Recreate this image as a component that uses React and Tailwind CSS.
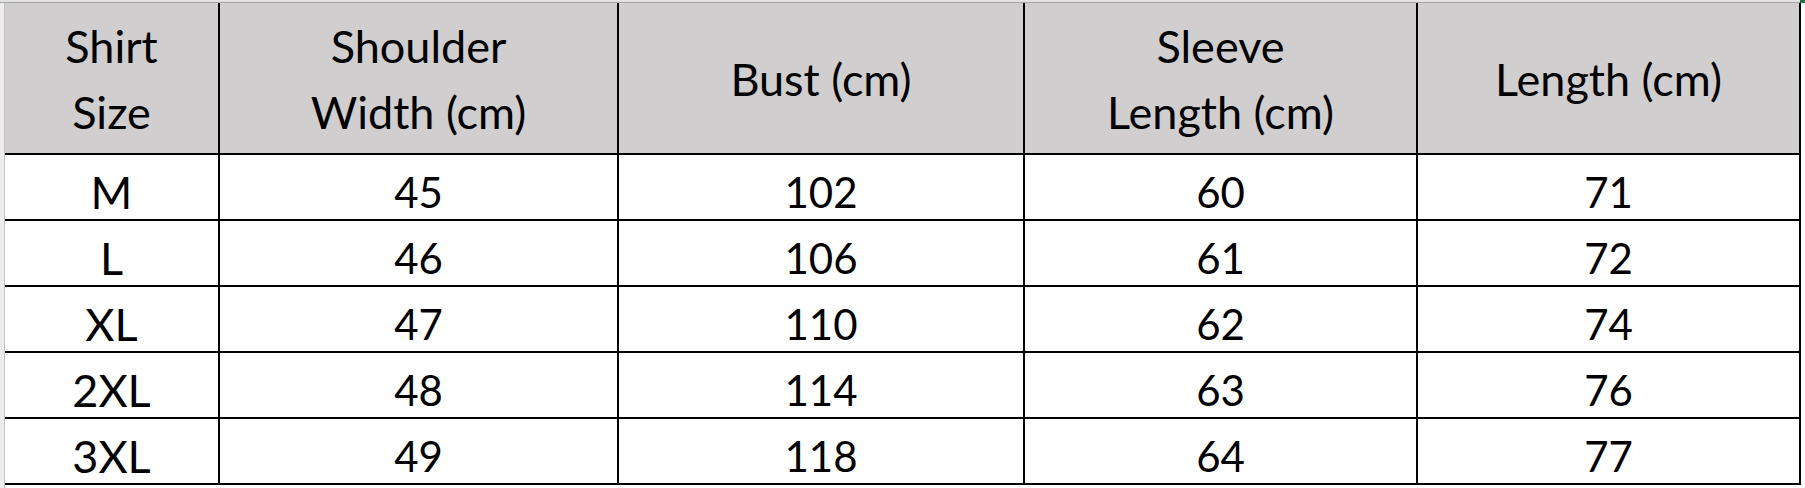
import React from 'react';

const cols = ['w-[213px]', 'w-[397px]', 'w-[404px]', 'w-[391px]', 'w-[381px]'];

const rows = [
  ['M', '45', '102', '60', '71'],
  ['L', '46', '106', '61', '72'],
  ['XL', '47', '110', '62', '74'],
  ['2XL', '48', '114', '63', '76'],
  ['3XL', '49', '118', '64', '77'],
];

function HeaderCell({ children, w }) {
  return (
    <div className={`${w} h-[150px] bg-[#d0cece] flex items-center justify-center text-center text-[45px] leading-[66px] pt-[1px]`}>
      <div>{children}</div>
    </div>
  );
}

function Cell({ children, w, first }) {
  return (
    <div className={`${w} h-[64px] bg-white flex items-center justify-center leading-[50px] pt-[10px] ${first ? 'text-[45px]' : 'text-[42px]'}`}>
      {children}
    </div>
  );
}

export default function App() {
  return (
    <div
      className="w-[1805px] h-[488px] bg-white text-black overflow-hidden"
      style={{ fontFamily: 'Lato, "Liberation Sans", sans-serif' }}
    >
      {/* sheet top edge */}
      <div className="flex h-[3px]">
        <div className="w-[1800px] flex flex-col">
          <div className="h-[2px] bg-[#e2e2e2]" />
          <div className="h-[1px] bg-[#a3a3a3]" />
        </div>
        <div className="w-[5px] bg-[#217346]" />
      </div>

      <div className="flex">
        {/* sheet left edge */}
        <div className="w-[4px] h-[485px] bg-[#ececec]" />
        <div className="w-[1px] h-[485px] bg-[#c4c4c4]" />

        {/* table */}
        <div className="flex flex-col self-start gap-[2px] bg-black pr-[2px] pb-[2px]">
          <div className="flex gap-[2px]">
            <HeaderCell w={cols[0]}>Shirt<br />Size</HeaderCell>
            <HeaderCell w={cols[1]}>Shoulder<br />Width (cm)</HeaderCell>
            <HeaderCell w={cols[2]}>Bust (cm)</HeaderCell>
            <HeaderCell w={cols[3]}>Sleeve<br />Length (cm)</HeaderCell>
            <HeaderCell w={cols[4]}>Length (cm)</HeaderCell>
          </div>
          {rows.map((r) => (
            <div key={r[0]} className="flex gap-[2px]">
              {r.map((v, i) => (
                <Cell key={i} w={cols[i]} first={i === 0}>{v}</Cell>
              ))}
            </div>
          ))}
        </div>
      </div>
    </div>
  );
}
